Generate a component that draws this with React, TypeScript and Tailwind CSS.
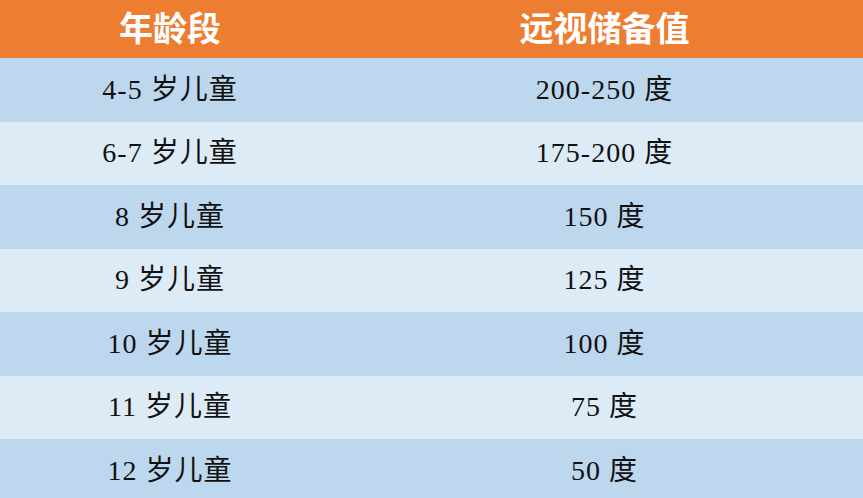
const rows = [
  { age: "4-5 岁儿童", value: "200-250 度" },
  { age: "6-7 岁儿童", value: "175-200 度" },
  { age: "8 岁儿童", value: "150 度" },
  { age: "9 岁儿童", value: "125 度" },
  { age: "10 岁儿童", value: "100 度" },
  { age: "11 岁儿童", value: "75 度" },
  { age: "12 岁儿童", value: "50 度" },
];

export default function App() {
  return (
    <div className="w-[863px] h-[498px] overflow-hidden bg-white font-['Liberation_Serif','Noto_Sans_CJK_SC',serif]">
      {/* Header */}
      <div className="flex h-[58px] bg-[#ED7D31] text-white text-[34px] font-bold">
        <div className="w-[340px] flex items-center justify-center">年龄段</div>
        <div className="flex-1 flex items-center justify-center pl-[6px]">远视储备值</div>
      </div>

      {rows.map((row, i) => (
        <div
          key={row.age}
          className={`flex h-[63.5px] text-[28px] tracking-[1px] text-[#111] ${i % 2 === 0 ? "bg-[#BDD7EE]" : "bg-[#DDEBF7]"}`}
        >
          <div className="w-[340px] flex items-center justify-center">{row.age}</div>
          <div className="flex-1 flex items-center justify-center pl-[6px]">{row.value}</div>
        </div>
      ))}
    </div>
  );
}
